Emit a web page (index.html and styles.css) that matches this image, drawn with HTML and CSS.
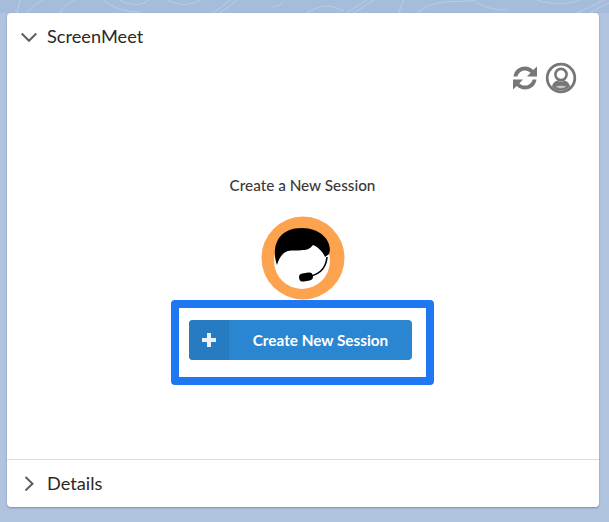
FILE: index.html
```html
<!DOCTYPE html>
<html lang="en">
<head>
  <meta charset="UTF-8">
  <title>ScreenMeet</title>
  <link rel="stylesheet" href="styles.css">
</head>
<body>
  <!-- background pattern strip -->
  <svg class="contours" width="609" height="13" viewBox="0 0 609 13" fill="none" stroke="#bccde4" stroke-width="1">
    <path d="M20 0L17 13M27 13C31 7 37 3 44 0M60 13C62 8 68 3 75 0"/>
    <path d="M103 0C112 6 120 12 140 12M120 0C126 4 134 6 145 3L148 0"/>
    <path d="M167 0C180 6 190 6 200 0M213 13C220 8 226 4 230 0M220 13C227 8 232 4 237 0M273 7C278 6 282 4 284 1"/>
    <path d="M307 13C318 6 328 3 344 11M347 13C354 8 361 4 367 0M354 13C361 8 368 4 374 0"/>
    <path d="M399 13C400 8 402 4 404 0M417 13C425 6 436 3 444 2C455 1 468 2 474 0C480 7 495 10 507 10"/>
    <path d="M537 0C552 5 566 5 580 0M577 13C588 8 596 4 604 0M590 13C596 9 602 6 609 3"/>
  </svg>

  <div class="card">
    <!-- ScreenMeet section -->
    <div class="section-header">
      <svg class="chevron" width="16" height="16" viewBox="0 0 16 16" fill="none" stroke="#5f5f5f" stroke-width="2">
        <path d="M0.7 5.5L8 12.8L15.3 5.5"/>
      </svg>
      <span>ScreenMeet</span>
    </div>

    <div class="section-body">
      <div class="toolbar">
        <svg class="refresh" width="26" height="26" viewBox="0 0 26 26" fill="#777">
          <path d="M1.5 11.5C2.2 5.8 7 1.5 13 1.5C16.2 1.5 19.1 2.8 21.2 5L25 1.5V11.5H15L18.6 7.8C17.2 6.3 15.2 5.4 13 5.4C9.2 5.4 6.2 8 5.4 11.5Z"/>
          <path d="M24.5 14.5C23.8 20.2 19 24.5 13 24.5C9.8 24.5 6.9 23.2 4.8 21L1 24.5V14.5H11L7.4 18.2C8.8 19.7 10.8 20.6 13 20.6C16.8 20.6 19.8 18 20.6 14.5Z"/>
        </svg>
        <svg width="32" height="32" viewBox="0 0 32 32" fill="none">
          <circle cx="16" cy="16" r="13.8" stroke="#777" stroke-width="2.8"/>
          <circle cx="16" cy="12.5" r="5.6" stroke="#777" stroke-width="2.6"/>
          <path d="M7 24.5C7.5 21 10 19.2 12.5 18.4C15 20 17 20 19.5 18.4C22 19.2 24.5 21 25 24.5C22.5 27 19.5 28.5 16 28.5C12.5 28.5 9.5 27 7 24.5Z" fill="#777"/>
          <path d="M10.5 24.5C13 23.5 19 23.5 21.5 24.5C19.5 25.8 17.5 26.3 16 26.3C14.5 26.3 12.5 25.8 10.5 24.5Z" fill="#c4c4c4"/>
        </svg>
      </div>

      <p class="session-title">Create a New Session</p>

      <svg class="agent" width="84" height="84" viewBox="0 0 84 84">
        <circle cx="42" cy="42" r="41.5" fill="#fda24f"/>
        <circle cx="41" cy="45" r="28" fill="#fff"/>
        <path d="M16 49C11 36 13 12 41 12C62 12 72 28 68 38L64 41C62 36 57 31 52 29C49 33 46 34 42 34C36 35 32 34 27 35C22 36 18 42 16 49Z" fill="#000"/>
        <path d="M50 60C58 58 65 52 66 41" fill="none" stroke="#000" stroke-width="1.6"/>
        <rect x="38" y="57" width="14" height="8" rx="4" transform="rotate(-10 45 61)" fill="#000"/>
      </svg>

      <div class="highlight">
        <button class="session-btn">
          <span class="btn-icon">
            <svg width="14" height="14" viewBox="0 0 14 14" fill="#e9f2fa"><path d="M5 0H9V5H14V9H9V14H5V9H0V5H5Z"/></svg>
          </span>
          <span class="btn-label">Create New Session</span>
        </button>
      </div>
    </div>

    <!-- Details section -->
    <div class="section-header details">
      <svg class="chevron" width="16" height="16" viewBox="0 0 16 16" fill="none" stroke="#5f5f5f" stroke-width="2">
        <path d="M4.5 2L11.5 8.7L4.5 15.5"/>
      </svg>
      <span>Details</span>
    </div>
  </div>
</body>
</html>
```

FILE: styles.css
```css
/* page */
body {
  margin: 0;
  height: 522px;
  overflow: hidden;
  background-color: #b0c4df;
  font-family: Lato, 'Open Sans', sans-serif;
  color: #2b2826;
}

.contours {
  display: block;
  background-color: #a5bcda;
}

/* card */
.card {
  width: 592px;
  height: 494px;
  margin-left: 7px;
  display: flex;
  flex-direction: column;
  background-color: white;
  border-radius: 4px;
  box-shadow: 0 1px 2px rgba(90, 100, 120, 0.6);
}

.section-header {
  height: 45px;
  flex-shrink: 0;
  display: flex;
  align-items: center;
  gap: 10px;
  padding-left: 14px;
  font-size: 18.2px;
}

.section-header.details {
  height: 45px;
  padding-bottom: 2px;
  border-top: 1px solid #dddbda;
}

.section-body {
  flex: 1;
  display: flex;
  flex-direction: column;
  align-items: center;
  padding-right: 1px;
}

/* refresh + user icons */
.toolbar {
  align-self: flex-end;
  display: flex;
  align-items: center;
  gap: 7px;
  padding-right: 21px;
  margin-top: 4px;
}

.refresh {
  margin-top: -1px;
}

.session-title {
  margin: 82px 0 0;
  font-size: 15.3px;
  font-weight: 500;
  color: #3a3a3a;
}

.agent {
  margin-top: 22px;
}

.highlight {
  margin-top: 0;
  width: 263px;
  height: 85px;
  box-sizing: border-box;
  border: 8px solid #1f78f2;
  border-radius: 4px;
  display: flex;
  justify-content: center;
  align-items: center;
  padding: 0 4px 5px 0;
}

.session-btn {
  width: 223px;
  height: 40px;
  flex-shrink: 0;
  padding: 0;
  display: flex;
  align-items: stretch;
  border: none;
  border-radius: 4px;
  overflow: hidden;
  background-color: #2a86d0;
  color: white;
  font-family: inherit;
  font-size: 15.3px;
  font-weight: 700;
}

.btn-icon {
  width: 40px;
  display: flex;
  justify-content: center;
  align-items: center;
  background-color: #277bc0;
}

.btn-label {
  flex: 1;
  align-self: center;
  text-align: center;
}
```
